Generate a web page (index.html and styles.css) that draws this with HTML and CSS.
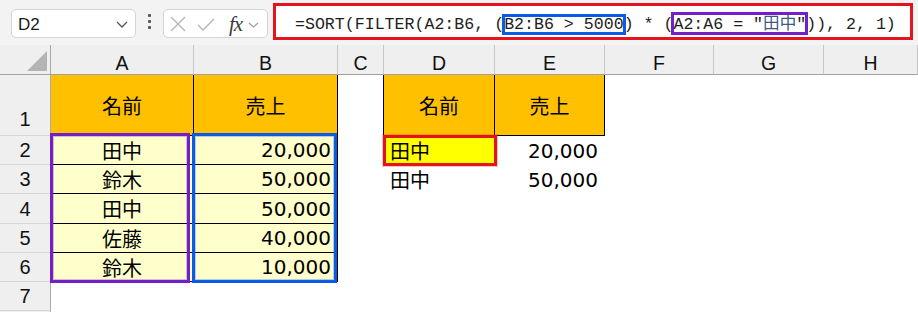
FILE: index.html
```html
<!DOCTYPE html>
<html lang="ja">
<head>
<meta charset="utf-8">
<title>SORT FILTER</title>
<link rel="stylesheet" href="styles.css">
</head>
<body>
<div class="app">
  <div class="toolbar">
    <div class="namebox">
      <span class="name">D2</span>
      <svg class="chev" width="12" height="7" viewBox="0 0 12 7"><polyline points="1,1 6,6 11,1" fill="none" stroke="#555" stroke-width="1.3"/></svg>
    </div>
    <div class="dots"><i></i><i></i><i></i></div>
    <div class="fxbox">
      <svg class="ico" width="16" height="16" viewBox="0 0 16 16"><path d="M1 1 L15 15 M15 1 L1 15" stroke="#b3b3b3" stroke-width="1.3" fill="none"/></svg>
      <svg class="ico check" width="18" height="13" viewBox="0 0 18 13"><polyline points="1,7 6,12 17,1" stroke="#b3b3b3" stroke-width="1.3" fill="none"/></svg>
      <span class="fx">fx</span>
      <svg class="chev2" width="11" height="6" viewBox="0 0 11 6"><polyline points="1,1 5.5,5 10,1" fill="none" stroke="#999" stroke-width="1.1"/></svg>
    </div>
    <div class="formula-wrap">
      <div class="formula">=SORT(FILTER(A2:B6, (<span class="ref ref-blue">B2:B6 &gt; 5000</span>) * (<span class="ref ref-purple">A2:A6 = "<span class="jp">田中</span>"</span>)), 2, 1)</div>
    </div>
  </div>

  <div class="sheet">
    <div class="corner"><svg width="20" height="20" viewBox="0 0 20 20"><polygon points="20,0 20,20 0,20" fill="#b4b4b4"/></svg></div>
    <div class="colh">A</div>
    <div class="colh">B</div>
    <div class="colh">C</div>
    <div class="colh">D</div>
    <div class="colh">E</div>
    <div class="colh">F</div>
    <div class="colh">G</div>
    <div class="colh">H</div>

    <div class="rowh bottom">1</div>
    <div class="cell head bd">名前</div>
    <div class="cell head bd">売上</div>
    <div class="cell bl"></div>
    <div class="cell head bd">名前</div>
    <div class="cell head bd">売上</div>
    <div class="cell"></div>
    <div class="cell"></div>
    <div class="cell"></div>

    <div class="rowh">2</div>
    <div class="cell data bd center">田中</div>
    <div class="cell data bd num">20,000</div>
    <div class="cell"></div>
    <div class="cell hl left">田中</div>
    <div class="cell numr">20,000</div>
    <div class="cell"></div>
    <div class="cell"></div>
    <div class="cell"></div>

    <div class="rowh">3</div>
    <div class="cell data bd center">鈴木</div>
    <div class="cell data bd num">50,000</div>
    <div class="cell"></div>
    <div class="cell left">田中</div>
    <div class="cell numr">50,000</div>
    <div class="cell"></div>
    <div class="cell"></div>
    <div class="cell"></div>

    <div class="rowh">4</div>
    <div class="cell data bd center">田中</div>
    <div class="cell data bd num">50,000</div>
    <div class="cell"></div>
    <div class="cell"></div>
    <div class="cell"></div>
    <div class="cell"></div>
    <div class="cell"></div>
    <div class="cell"></div>

    <div class="rowh">5</div>
    <div class="cell data bd center">佐藤</div>
    <div class="cell data bd num">40,000</div>
    <div class="cell"></div>
    <div class="cell"></div>
    <div class="cell"></div>
    <div class="cell"></div>
    <div class="cell"></div>
    <div class="cell"></div>

    <div class="rowh">6</div>
    <div class="cell data bd center">鈴木</div>
    <div class="cell data bd num">10,000</div>
    <div class="cell"></div>
    <div class="cell"></div>
    <div class="cell"></div>
    <div class="cell"></div>
    <div class="cell"></div>
    <div class="cell"></div>

    <div class="rowh">7</div>
    <div class="cell"></div>
    <div class="cell"></div>
    <div class="cell"></div>
    <div class="cell"></div>
    <div class="cell"></div>
    <div class="cell"></div>
    <div class="cell"></div>
    <div class="cell"></div>

    <div class="rowh"></div>
    <div class="cell"></div>
    <div class="cell"></div>
    <div class="cell"></div>
    <div class="cell"></div>
    <div class="cell"></div>
    <div class="cell"></div>
    <div class="cell"></div>
    <div class="cell"></div>

    <div class="mark mark-purple"></div>
    <div class="mark mark-blue"></div>
    <div class="mark mark-red"></div>
  </div>
</div>
</body>
</html>
```

FILE: styles.css
```css
* { box-sizing: border-box; }
html, body { margin: 0; padding: 0; background: #fff; }
body { width: 918px; height: 312px; overflow: hidden; }

.app { width: 918px; height: 312px; overflow: hidden; }

/* ---------- toolbar ---------- */
.toolbar {
  height: 45px;
  background: #f3f3f3;
  display: flex;
  align-items: flex-start;
  padding-left: 11px;
}
.namebox {
  width: 125px;
  height: 29px;
  margin-top: 9px;
  background: #fff;
  border: 1px solid #d4d4d4;
  border-radius: 5px;
  display: flex;
  align-items: center;
  justify-content: space-between;
  padding: 0 7px 0 6px;
}
.name {
  font-family: "Liberation Sans", Arial, sans-serif;
  font-size: 17px;
  color: #1a1a1a;
  line-height: 17px;
  padding-top: 1px;
}
.chev { margin-top: 2px; }

.dots {
  width: 27px;
  height: 45px;
  display: flex;
  flex-direction: column;
  align-items: center;
  justify-content: center;
  gap: 3px;
  padding-bottom: 2px;
}
.dots i {
  display: block;
  width: 3px;
  height: 3px;
  background: #555;
  border-radius: 1px;
}

.fxbox {
  width: 105px;
  height: 29px;
  margin-top: 9px;
  background: #fff;
  border: 1px solid #d4d4d4;
  border-radius: 5px;
  display: flex;
  align-items: center;
  padding-left: 6px;
}
.ico { flex: none; }
.check { margin-left: 11px; margin-top: 1px; }
.fx {
  font-family: "Liberation Serif", "Times New Roman", serif;
  font-style: italic;
  font-size: 21px;
  color: #3a3a3a;
  margin-left: 14px;
  line-height: 20px;
  letter-spacing: -1px;
}
.chev2 { margin-left: 6px; margin-top: 2px; }

.formula-wrap {
  width: 640px;
  height: 37px;
  margin-top: 3px;
  margin-left: 5px;
  border: 3px solid #e3141c;
  background: #fff;
}
.formula {
  font-family: "Liberation Mono", "Courier New", "Noto Sans CJK JP", monospace;
  font-size: 16.6px;
  line-height: 20px;
  color: #1e1e1e;
  padding-left: 19px;
  padding-top: 8px;
  white-space: pre;
}
.ref {
  display: inline-block;
  line-height: 17px;
  outline-offset: -1px;
}
.ref-blue { outline: 3px solid #0a5ce8; }
.ref-purple { outline: 3px solid #7420c8; }
.jp {
  font-family: "Noto Sans CJK JP", sans-serif;
  color: #3d5a80;
}

/* ---------- sheet ---------- */
.sheet {
  position: relative;
  display: grid;
  grid-template-columns: 51px 143px 144px 46px 111px 110px 109px 110px 94px;
  grid-template-rows: 30px 61px 29px 29px 30px 29px 29px 29px 29px;
  font-family: "DejaVu Sans", "Noto Sans CJK JP", sans-serif;
}
.corner {
  background: #efefef;
  border-right: 1px solid #a9a9a9;
  border-bottom: 1px solid #a0a0a0;
  display: flex;
  align-items: flex-end;
  justify-content: flex-end;
  padding: 0 3px 3px 0;
}
.colh {
  background: #efefef;
  border-right: 1px solid #c6c6c6;
  border-bottom: 1px solid #a0a0a0;
  display: flex;
  align-items: flex-end;
  justify-content: center;
  font-family: "Liberation Sans", Arial, sans-serif;
  font-size: 19.5px;
  line-height: 19px;
  color: #111;
  padding-bottom: 1px;
}
.rowh {
  background: #efefef;
  border-right: 1px solid #a9a9a9;
  border-bottom: 1px solid #d6d6d6;
  display: flex;
  align-items: center;
  justify-content: center;
  font-family: "Liberation Sans", Arial, sans-serif;
  font-size: 20px;
  color: #111;
  padding-top: 1px;
}
.rowh.bottom { align-items: flex-end; padding-bottom: 4px; }

.cell {
  display: flex;
  align-items: center;
  font-size: 20px;
  color: #000;
  white-space: nowrap;
  min-width: 0;
}
.cell.bd {
  border-right: 1px solid #000;
  border-bottom: 1px solid #000;
}
.cell.bl { border-right: 1px solid #000; }
.cell.head {
  background: #ffc000;
  justify-content: center;
  padding-top: 1px;
}
.cell.data { background: #ffffcc; }
.cell.center { justify-content: center; }
.cell.num { justify-content: flex-end; padding-right: 6px; }
.cell.numr { justify-content: flex-end; padding-right: 7px; }
.cell.left { justify-content: flex-start; padding-left: 6px; }
.cell.hl { background: #ffff00; }

/* highlight frames that lie over the cells */
.mark { position: absolute; pointer-events: none; }
.mark-purple {
  left: 50px; top: 88px; width: 140px; height: 150px;
  border: 3px solid #7420c8;
  box-shadow: inset 0 0 0 1px rgba(116, 32, 200, 0.3);
}
.mark-blue {
  left: 192px; top: 88px; width: 145px; height: 150px;
  border: 3px solid #0a5ce8;
  box-shadow: inset 0 0 0 1px rgba(10, 92, 232, 0.3);
}
.mark-red {
  left: 383px; top: 90px; width: 114px; height: 31px;
  border: 3px solid #e3141c;
  box-shadow: 0 0 0 1px rgba(227, 20, 28, 0.25);
}
```
